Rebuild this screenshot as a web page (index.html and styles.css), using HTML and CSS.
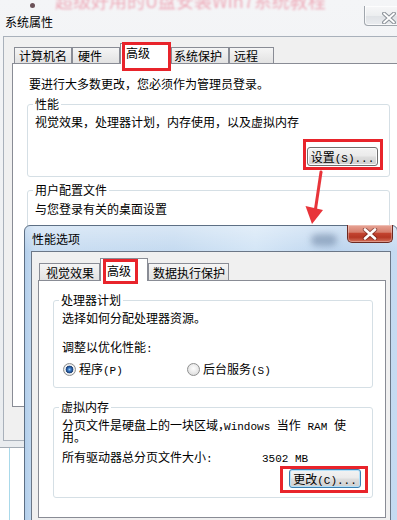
FILE: index.html
```html
<!DOCTYPE html>
<html lang="zh-CN">
<head>
<meta charset="utf-8">
<title>性能选项</title>
<link rel="stylesheet" href="styles.css">
</head>
<body>
  <section class="win1">
    <header class="tb1">
      <span class="bullet" aria-hidden="true"></span>
      <span class="blur-title" aria-hidden="true">超级好用的U盘安装Win7系统教程</span>
      <span class="tb-title t1">系统属性</span>
      <span class="close1">
        <svg width="14" height="12" viewBox="0 0 14 12"><path d="M2 1.5 L12 10.5 M12 1.5 L2 10.5" stroke="#8d939a" stroke-width="4" stroke-linecap="round" fill="none"/><path d="M2 1.5 L12 10.5 M12 1.5 L2 10.5" stroke="#ffffff" stroke-width="1.8" stroke-linecap="round" fill="none"/></svg>
      </span>
    </header>
    <div class="client1">
      <nav class="tabs tabs1">
        <span class="tab w58 pl4">计算机名</span>
        <span class="tab w48">硬件</span>
        <span class="tab sel w51">高级</span>
        <span class="tab w58 pl2">系统保护</span>
        <span class="tab w45 pl4">远程</span>
      </nav>
      <div class="panel panel1">
        <p class="intro">要进行大多数更改，您必须作为管理员登录。</p>
        <fieldset class="gb gb-perf">
          <legend>性能</legend>
          <p class="gtext1">视觉效果，处理器计划，内存使用，以及虚拟内存</p>
          <div class="btnrow btnrow1"><button class="btn"><span class="btn-label">设置<span class="lat">(S)...</span></span></button></div>
        </fieldset>
        <fieldset class="gb gb-prof">
          <legend>用户配置文件</legend>
          <p class="gtext2">与您登录有关的桌面设置</p>
        </fieldset>
      </div>
    </div>
  </section>

  <section class="win2">
    <header class="tb2">
      <span class="tb-title t2">性能选项</span>
      <span class="ghost" aria-hidden="true"></span>
      <span class="close2">
        <svg width="16" height="12" viewBox="0 0 16 12"><path d="M3 1.5 L13 10.5 M13 1.5 L3 10.5" stroke="#5a1c16" stroke-width="4.4" stroke-linecap="round" fill="none" opacity="0.55"/><path d="M3 1.5 L13 10.5 M13 1.5 L3 10.5" stroke="#ffffff" stroke-width="2.6" stroke-linecap="round" fill="none"/></svg>
      </span>
    </header>
    <div class="client2">
      <nav class="tabs tabs2">
        <span class="tab w61">视觉效果</span>
        <span class="tab sel w48">高级</span>
        <span class="tab w81 pl4">数据执行保护</span>
      </nav>
      <div class="panel panel2">
        <fieldset class="gb gb-cpu">
          <legend>处理器计划</legend>
          <p class="cpu-desc">选择如何分配处理器资源。</p>
          <p class="cpu-label">调整以优化性能<span class="lat">:</span></p>
          <div class="radios">
            <span class="opt"><span class="radio on"></span><span>程序<span class="lat">(P)</span></span></span>
            <span class="opt"><span class="radio"></span><span>后台服务<span class="lat">(S)</span></span></span>
          </div>
        </fieldset>
        <fieldset class="gb gb-vm">
          <legend>虚拟内存</legend>
          <p class="vm-text">分页文件是硬盘上的一块区域<span class="half">，</span><span class="lat">Windows </span>当作<span class="lat"> RAM </span>使<br>用。</p>
          <div class="vm-size"><span>所有驱动器总分页文件大小<span class="lat">:</span></span><span><span class="lat">3502 MB</span></span></div>
          <div class="btnrow btnrow2"><button class="btn btn-def"><span class="btn-label">更改<span class="lat">(C)...</span></span></button></div>
        </fieldset>
      </div>
    </div>
  </section>

  <div class="mark m1"></div>
  <div class="mark m2"></div>
  <div class="mark m3"></div>
  <div class="mark m4"></div>
  <svg class="arrow" width="30" height="62" viewBox="300 165 30 62">
    <path d="M321 172 L315.5 209" stroke="#e8343a" stroke-width="3" stroke-linecap="round" fill="none"/>
    <path d="M305.5 206 L323 210 L312 224 Z" fill="#e8343a"/>
  </svg>
</body>
</html>
```

FILE: styles.css
```css
* { box-sizing: border-box; }
html, body { margin: 0; padding: 0; }
body {
  position: relative;
  width: 397px;
  height: 520px;
  overflow: hidden;
  font-family: "Noto Sans CJK SC", "Noto Sans", sans-serif;
  font-size: 12px;
  line-height: 14px;
  color: #000;
  background: linear-gradient(90deg, transparent 9px, #a9d9ea 9px, #a9d9ea 10px, transparent 10px) #fff;
}
p { margin: 0; }
.lat { font-family: "Liberation Mono", monospace; font-size: 11px; line-height: 0; }
.half { font-feature-settings: "halt"; }

/* ---------- window 1 : 系统属性 ---------- */
.win1 {
  position: absolute;
  left: 0;
  top: 0;
  width: 420px;
  height: 448px;
  display: flex;
  flex-direction: column;
  padding: 0 7px 6px 3px;
  background: linear-gradient(#f4f5f7, #e9ecef);
  border-bottom: 1px solid #a3abb4;
}
.tb1 {
  position: relative;
  height: 36px;
  flex: none;
  display: flex;
  align-items: flex-start;
}
.bullet {
  position: absolute;
  left: 27px;
  top: 3px;
  width: 5px;
  height: 5px;
  border-radius: 50%;
  background: #6b5258;
  filter: blur(0.6px);
}
.blur-title {
  position: absolute;
  left: 52px;
  top: -9px;
  font-size: 18px;
  line-height: 18px;
  color: #e8607a;
  white-space: nowrap;
  filter: blur(1.3px);
  opacity: 0.5;
}
.tb-title { white-space: nowrap; position: relative; }
.t1 { margin: 15px 0 0 2px; }
.close1 {
  display: flex;
  margin: 6px 6px 0 auto;
  width: 43px;
  height: 20px;
  padding: 6px 0 0 17px;
  border: 1px solid #a0a6ad;
  border-top: 0;
  border-radius: 0 0 4px 4px;
  background: linear-gradient(#f7f7f8, #eceef0 50%, #dfe2e6 51%, #eaecef);
  box-shadow: inset 0 0 0 1px rgba(255,255,255,0.7);
}
.client1 {
  flex: 1;
  background: #f0f0f0;
  border: 1px solid #a9b1bb;
  padding: 6px 8px 0 8px;
}

/* ---------- tabs ---------- */
.tabs {
  display: flex;
  align-items: flex-end;
  position: relative;
  z-index: 1;
}
.tab {
  flex: none;
  border: 1px solid #898c95;
  border-bottom: 0;
  background: linear-gradient(#f5f5f5, #e2e2e2);
  white-space: nowrap;
  padding-left: 5px;
}
.tab.sel { background: #fff; margin-bottom: -1px; }
.w45 { width: 45px; }
.w48 { width: 48px; }
.w51 { width: 51px; }
.w58 { width: 58px; }
.w61 { width: 61px; }
.w81 { width: 81px; }
.tabs1 { margin-left: 2px; height: 20px; }
.tabs1 .tab { height: 16px; padding-top: 1px; }
.tabs1 .tab.sel { height: 21px; padding-top: 2px; }
.tabs2 { margin-left: 1px; height: 22px; }
.tabs2 .tab { height: 17px; padding-top: 2px; padding-left: 6px; }
.tabs2 .tab.sel { height: 23px; padding-top: 5px; }
.tabs .pl4 { padding-left: 4px; }
.tabs .pl2 { padding-left: 2px; }

/* ---------- panels & group boxes ---------- */
.panel { background: #fff; border: 1px solid #898c95; }
.panel1 { height: 344px; padding: 13px 13px 0 14px; }
.intro { padding-left: 2px; }
.gb {
  margin: 6px 0 0;
  padding: 0;
  border: 1px solid #d5dfe5;
  border-radius: 3px;
  min-width: 0;
}
.gb legend { margin-left: 5px; padding: 0 2px; line-height: 14px; }
.gb-perf { padding-bottom: 10px; }
.gtext1 { padding: 4px 0 0 7px; }
.gb-prof { height: 160px; }
.gtext2 { padding: 5px 0 0 7px; }

.btnrow { display: flex; justify-content: flex-end; padding-right: 11px; }
.btnrow1 { margin-top: 18px; }
.btnrow2 { margin-top: 5px; }
.btn {
  display: flex;
  align-items: center;
  justify-content: center;
  width: 71px;
  height: 19px;
  padding: 0;
  font: inherit;
  line-height: 14px;
  color: #000;
  border: 1px solid #707070;
  border-radius: 3px;
  background: linear-gradient(#f3f3f3, #ebebeb 45%, #dddddd 55%, #cfcfcf);
  box-shadow: inset 0 0 0 1px #fbfbfb;
}
.btn-label { white-space: nowrap; }
.btn-def {
  width: 72px;
  border-color: #3c7fb1;
  box-shadow: inset 0 0 0 1px #b4e0f8;
}

/* ---------- window 2 : 性能选项 ---------- */
.win2 {
  position: absolute;
  left: 24px;
  top: 225px;
  width: 374px;
  height: 300px;
  display: flex;
  flex-direction: column;
  padding: 0 6px;
  border: 1px solid #5d6f84;
  border-radius: 6px 6px 0 0;
  background:
    linear-gradient(rgba(255,255,255,0.35), rgba(255,255,255,0) 26px),
    linear-gradient(90deg, #b3cfeb 0, #c9ddf2 10px, #c4daf0 40%, #d3e5f6 62%, #bcd4ee 85%, #c6dbf1 100%);
}
.tb2 {
  height: 25px;
  flex: none;
  display: flex;
  align-items: flex-start;
}
.t2 { margin: 6px 0 0 1px; }
.ghost {
  margin: 8px 0 0 auto;
  width: 26px;
  height: 12px;
  border-radius: 6px;
  background: rgba(70, 95, 130, 0.4);
  filter: blur(3px);
}
.close2 {
  display: flex;
  align-items: center;
  justify-content: center;
  margin: -1px -2px 0 10px;
  width: 46px;
  height: 18px;
  border: 1px solid #6d2a22;
  border-top: 0;
  border-radius: 0 0 5px 5px;
  background: linear-gradient(#e8a597 0, #d77f6d 42%, #c2432f 50%, #b53724 72%, #d4715b 100%);
  box-shadow: inset 0 0 0 1px rgba(255,255,255,0.3);
}
.client2 {
  flex: 1;
  background: #f0f0f0;
  border: 1px solid #6b7787;
  border-bottom: 0;
  padding: 6px 0 0 6px;
}
.panel2 { width: 348px; height: 238px; padding: 12px 0 0 14px; }
.gb-cpu { width: 320px; margin-top: 0; padding-bottom: 11px; }
.cpu-desc { padding: 4px 0 0 8px; }
.cpu-label { margin-top: 15px; padding-left: 8px; }
.radios {
  display: grid;
  grid-template-columns: 124px auto;
  margin-top: 8px;
  padding-left: 9px;
}
.opt { display: flex; align-items: center; gap: 3px; white-space: nowrap; }
.radio {
  flex: none;
  width: 13px;
  height: 13px;
  border-radius: 50%;
  border: 1px solid #8e8f8f;
  background: radial-gradient(circle at 50% 40%, #fdfdfd 0, #ececec 45%, #d4d4d4 100%);
}
.radio.on {
  background: radial-gradient(circle at 50% 50%, #9ccbf2 0, #3a78c2 1.6px, #1f4a8a 3px, #2b4d7b 3.6px, #f6f6f6 4.2px, #e6e6e6 5.4px, #d0d0d0 6.5px);
}
.gb-vm { width: 320px; margin-top: 12px; padding-bottom: 9px; }
.vm-text { padding: 5px 0 0 8px; line-height: 12px; white-space: nowrap; }
.vm-size {
  display: grid;
  grid-template-columns: 200px auto;
  margin-top: 7px;
  padding-left: 8px;
  white-space: nowrap;
}

/* ---------- annotations ---------- */
.mark { position: absolute; z-index: 5; border: 3px solid #e8242b; }
.m1 { left: 122px; top: 42px; width: 49px; height: 29px; }
.m2 { left: 303px; top: 139px; width: 80px; height: 31px; }
.m3 { left: 103px; top: 259px; width: 35px; height: 25px; }
.m4 { left: 280px; top: 466px; width: 88px; height: 27px; }
.arrow { position: absolute; left: 300px; top: 165px; z-index: 5; }
```
